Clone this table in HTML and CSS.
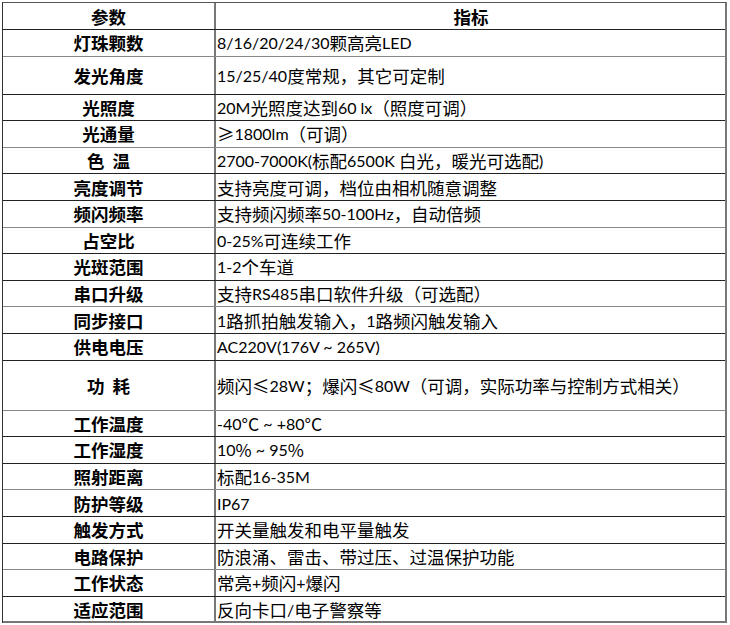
FILE: index.html
```html
<!DOCTYPE html>
<html lang="zh-CN">
<head>
<meta charset="utf-8">
<link rel="stylesheet" href="styles.css">
</head>
<body>
<div class="table">
  <div class="row head"><div class="k">参数</div><div class="v c">指标</div></div>
  <div class="row"><div class="k">灯珠颗数</div><div class="v"><span class="l">8/16/20/24/30</span>颗高亮<span class="l">LED</span></div></div>
  <div class="row tall"><div class="k">发光角度</div><div class="v"><span class="l">15/25/40</span>度常规，其它可定制</div></div>
  <div class="row"><div class="k">光照度</div><div class="v"><span class="l">20M</span>光照度达到<span class="l">60 lx</span>（照度可调）</div></div>
  <div class="row"><div class="k">光通量</div><div class="v">≥<span class="l">1800lm</span>（可调）</div></div>
  <div class="row"><div class="k">色&nbsp;&nbsp;温</div><div class="v"><span class="l">2700-7000K(</span>标配<span class="l">6500K </span>白光，暖光可选配<span class="l">)</span></div></div>
  <div class="row"><div class="k">亮度调节</div><div class="v">支持亮度可调，档位由相机随意调整</div></div>
  <div class="row"><div class="k">频闪频率</div><div class="v">支持频闪频率<span class="l">50-100Hz</span>，自动倍频</div></div>
  <div class="row"><div class="k">占空比</div><div class="v"><span class="l">0-25%</span>可连续工作</div></div>
  <div class="row"><div class="k">光斑范围</div><div class="v"><span class="l">1-2</span>个车道</div></div>
  <div class="row"><div class="k">串口升级</div><div class="v">支持<span class="l">RS485</span>串口软件升级（可选配）</div></div>
  <div class="row"><div class="k">同步接口</div><div class="v"><span class="l">1</span>路抓拍触发输入，<span class="l">1</span>路频闪触发输入</div></div>
  <div class="row"><div class="k">供电电压</div><div class="v"><span class="l">AC220V(176V ~ 265V)</span></div></div>
  <div class="row xl"><div class="k">功&nbsp;&nbsp;耗</div><div class="v">频闪≤<span class="l">28W</span>；爆闪≤<span class="l">80W</span>（可调，实际功率与控制方式相关）</div></div>
  <div class="row"><div class="k">工作温度</div><div class="v"><span class="l">-40</span>°C<span class="l"> ~ +80</span>°C</div></div>
  <div class="row"><div class="k">工作湿度</div><div class="v"><span class="l">10</span>%<span class="l"> ~ 95</span>%</div></div>
  <div class="row"><div class="k">照射距离</div><div class="v">标配<span class="l">16-35M</span></div></div>
  <div class="row"><div class="k">防护等级</div><div class="v"><span class="l">IP67</span></div></div>
  <div class="row"><div class="k">触发方式</div><div class="v">开关量触发和电平量触发</div></div>
  <div class="row"><div class="k">电路保护</div><div class="v">防浪涌、雷击、带过压、过温保护功能</div></div>
  <div class="row"><div class="k">工作状态</div><div class="v">常亮<span class="l">+</span>频闪<span class="l">+</span>爆闪</div></div>
  <div class="row last"><div class="k">适应范围</div><div class="v">反向卡口<span class="l">/</span>电子警察等</div></div>
</div>
</body>
</html>
```

FILE: styles.css
```css
html, body {
  margin: 0;
  padding: 0;
  background: #ffffff;
}
body {
  font-family: "Noto Sans CJK SC", sans-serif;
  font-size: 17.5px;
  color: #000;
}
.table {
  margin: 2px 0 0 2px;
  width: 725px;
  border-top: 1px solid #555;
  border-left: 1px solid #333;
  border-right: 2px solid #777;
  box-sizing: border-box;
}
.row {
  display: grid;
  grid-template-columns: 213px 1fr;
  height: 26.6px;
  box-sizing: border-box;
  border-bottom: 1px solid #222;
}
.row:nth-child(3n+2) { border-bottom-color: #888; }
.row.head { height: 27px; }
.row.tall { height: 38px; }
.row.xl { height: 50px; }
.row.last { border-bottom: 2px solid #777; }
.k {
  border-right: 2px solid #777;
  display: flex;
  align-items: center;
  justify-content: center;
  font-weight: bold;
  white-space: pre;
}
.v {
  display: flex;
  align-items: center;
  padding-left: 1px;
  white-space: pre;
}
.v.c {
  justify-content: center;
  font-weight: bold;
}
.l {
  font-family: "Lato", sans-serif;
  font-size: 16px;
}
```
